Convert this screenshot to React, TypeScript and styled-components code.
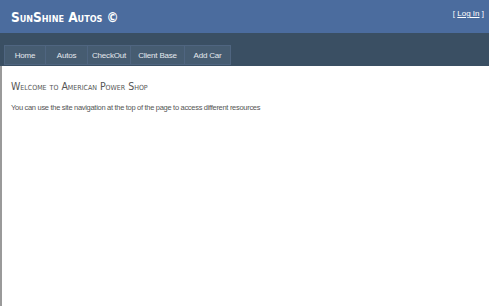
import React from "react";
import styled, { createGlobalStyle } from "styled-components";

const Global = createGlobalStyle`
  html, body { margin: 0; padding: 0; background: #fff; }
  body { font-family: "Liberation Sans", Arial, sans-serif; }
`;

const Page = styled.div`
  width: 489px;
  height: 306px;
  display: flex;
  flex-direction: column;
  background: #fff;
`;

const Header = styled.div`
  background: #4b6c9e;
  height: 33px;
  display: flex;
  justify-content: space-between;
  align-items: flex-start;
`;

const Title = styled.h1`
  margin: 0;
  padding: 9px 0 0 11px;
  color: #fff;
  font-size: 13.5px;
  font-weight: bold;
  font-variant: small-caps;
  font-family: "DejaVu Sans Condensed", "DejaVu Sans", sans-serif;
`;

const Login = styled.div`
  padding: 9px 5px 0 0;
  color: #fff;
  font-size: 8px;
  a { color: #fff; }
`;

const NavBand = styled.div`
  background: #3a4f63;
  height: 33px;
  display: flex;
  align-items: flex-end;
  padding: 0 0 1px 4px;
  box-sizing: border-box;
`;

const Menu = styled.div`
  display: flex;
`;

const MenuItem = styled.div<{ $w: number }>`
  width: ${(p) => p.$w}px;
  height: 20px;
  box-sizing: border-box;
  background: #465c71;
  border: 1px solid #4f6580;
  border-right-width: 0;
  &:last-child { border-right-width: 1px; }
  color: #e4e8ee;
  font-size: 8px;
  letter-spacing: -0.2px;
  display: flex;
  align-items: center;
  justify-content: center;
`;

const Main = styled.div`
  flex: 1;
  border-left: 2px solid #9a9a9a;
  padding: 14px 0 0 9px;
`;

const Heading = styled.h2`
  margin: 0;
  color: #555;
  font-size: 10.5px;
  font-weight: normal;
  font-variant: small-caps;
  font-family: "DejaVu Sans Condensed", "DejaVu Sans", sans-serif;
`;

const Para = styled.p`
  margin: 11px 0 0 0;
  color: #555;
  font-size: 7.5px;
  letter-spacing: -0.3px;
`;

const items: [string, number][] = [
  ["Home", 41],
  ["Autos", 42],
  ["CheckOut", 43],
  ["Client Base", 54],
  ["Add Car", 47],
];

export default function App() {
  return (
    <Page>
      <Global />
      <Header>
        <Title>SunShine Autos ©</Title>
        <Login>[ <a href="#">Log In</a> ]</Login>
      </Header>
      <NavBand>
        <Menu>
          {items.map(([t, w]) => (
            <MenuItem key={t} $w={w}>{t}</MenuItem>
          ))}
        </Menu>
      </NavBand>
      <Main>
        <Heading>Welcome to American Power Shop</Heading>
        <Para>You can use the site navigation at the top of the page to access different resources</Para>
      </Main>
    </Page>
  );
}
